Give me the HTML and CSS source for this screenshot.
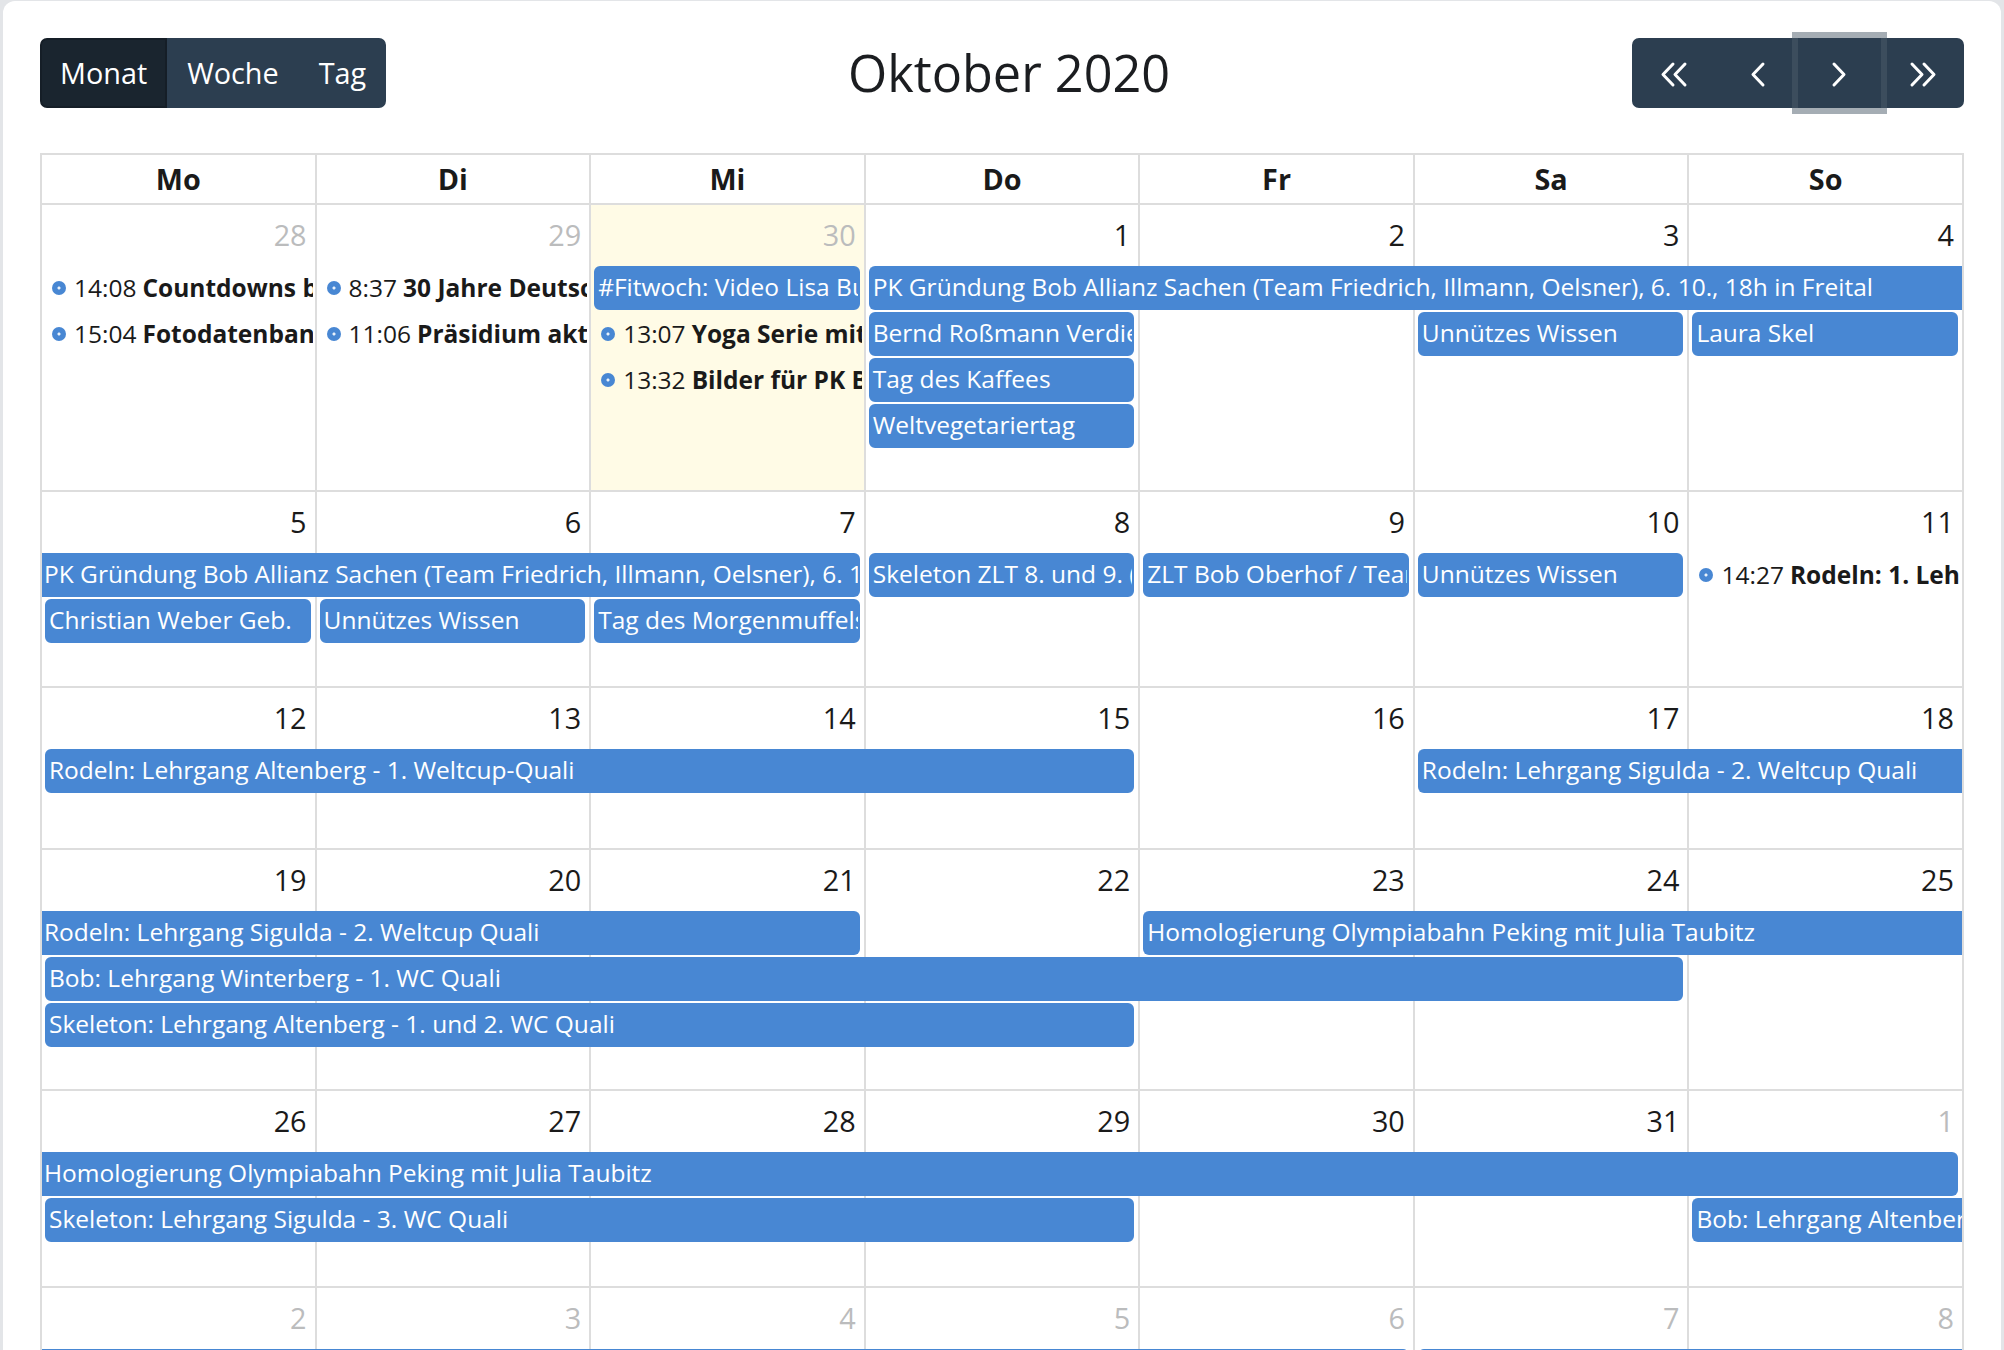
FILE: index.html
```html
<!DOCTYPE html>
<html lang="de">
<head>
<meta charset="utf-8">
<title>Kalender Oktober 2020</title>
<link rel="stylesheet" href="styles.css">
</head>
<body>
<div class="card">
  <div class="toolbar">
    <div class="btn-group">
      <button class="btn active">Monat</button>
      <button class="btn">Woche</button>
      <button class="btn">Tag</button>
    </div>
    <h2 class="title">Oktober 2020</h2>
    <div class="btn-group">
      <button class="btn icon-btn" aria-label="Vorheriges Jahr"><svg viewBox="0 0 42 42" width="42" height="42"><polyline points="20,12 10,22.5 20,33"/><polyline points="32,12 22,22.5 32,33"/></svg></button>
      <button class="btn icon-btn" aria-label="Zurück"><svg viewBox="0 0 42 42" width="42" height="42"><polyline points="27,12 17,22.5 27,33"/></svg></button>
      <button class="btn icon-btn focus" aria-label="Weiter"><svg viewBox="0 0 42 42" width="42" height="42"><polyline points="15,12 25,22.5 15,33"/></svg></button>
      <button class="btn icon-btn" aria-label="Nächstes Jahr"><svg viewBox="0 0 42 42" width="42" height="42"><polyline points="10,12 20,22.5 10,33"/><polyline points="22,12 32,22.5 22,33"/></svg></button>
    </div>
  </div>

  <div class="cal">
    <div class="head">
      <div>Mo</div><div>Di</div><div>Mi</div><div>Do</div><div>Fr</div><div>Sa</div><div>So</div>
    </div>

    <!-- Woche 1 -->
    <div class="week rows4">
      <div class="cell c1"></div><div class="cell c2"></div><div class="cell c3 today"></div><div class="cell c4"></div><div class="cell c5"></div><div class="cell c6"></div><div class="cell c7"></div>
      <div class="num c1 other">28</div><div class="num c2 other">29</div><div class="num c3 other">30</div><div class="num c4">1</div><div class="num c5">2</div><div class="num c6">3</div><div class="num c7">4</div>

      <div class="dot-ev" style="grid-column:1;grid-row:2"><span class="dot"></span><span class="t">14:08</span><b>Countdowns bis zum Saisonstart</b></div>
      <div class="dot-ev" style="grid-column:1;grid-row:3"><span class="dot"></span><span class="t">15:04</span><b>Fotodatenbank</b></div>
      <div class="dot-ev" style="grid-column:2;grid-row:2"><span class="dot"></span><span class="t">8:37</span><b>30 Jahre Deutsche Einheit</b></div>
      <div class="dot-ev" style="grid-column:2;grid-row:3"><span class="dot"></span><span class="t">11:06</span><b>Präsidium aktuell</b></div>
      <div class="ev" style="grid-column:3;grid-row:2">#Fitwoch: Video Lisa Buckwitz</div>
      <div class="dot-ev" style="grid-column:3;grid-row:3"><span class="dot"></span><span class="t">13:07</span><b>Yoga Serie mit Athleten</b></div>
      <div class="dot-ev" style="grid-column:3;grid-row:4"><span class="dot"></span><span class="t">13:32</span><b>Bilder für PK Bob Allianz</b></div>
      <div class="ev ne" style="grid-column:4 / 8;grid-row:2">PK Gründung Bob Allianz Sachen (Team Friedrich, Illmann, Oelsner), 6. 10., 18h in Freital</div>
      <div class="ev" style="grid-column:4;grid-row:3">Bernd Roßmann Verdienstorden</div>
      <div class="ev" style="grid-column:4;grid-row:4">Tag des Kaffees</div>
      <div class="ev" style="grid-column:4;grid-row:5">Weltvegetariertag</div>
      <div class="ev" style="grid-column:6;grid-row:3">Unnützes Wissen</div>
      <div class="ev" style="grid-column:7;grid-row:3">Laura Skel</div>
    </div>

    <!-- Woche 2 -->
    <div class="week rows2">
      <div class="cell c1"></div><div class="cell c2"></div><div class="cell c3"></div><div class="cell c4"></div><div class="cell c5"></div><div class="cell c6"></div><div class="cell c7"></div>
      <div class="num c1">5</div><div class="num c2">6</div><div class="num c3">7</div><div class="num c4">8</div><div class="num c5">9</div><div class="num c6">10</div><div class="num c7">11</div>

      <div class="ev ns" style="grid-column:1 / 4;grid-row:2">PK Gründung Bob Allianz Sachen (Team Friedrich, Illmann, Oelsner), 6. 10., 18h in Freital</div>
      <div class="ev" style="grid-column:4;grid-row:2">Skeleton ZLT 8. und 9. (Altenberg)</div>
      <div class="ev" style="grid-column:5;grid-row:2">ZLT Bob Oberhof / Team</div>
      <div class="ev" style="grid-column:6;grid-row:2">Unnützes Wissen</div>
      <div class="dot-ev" style="grid-column:7;grid-row:2"><span class="dot"></span><span class="t">14:27</span><b>Rodeln: 1. Lehrgang</b></div>
      <div class="ev" style="grid-column:1;grid-row:3">Christian Weber Geb.</div>
      <div class="ev" style="grid-column:2;grid-row:3">Unnützes Wissen</div>
      <div class="ev" style="grid-column:3;grid-row:3">Tag des Morgenmuffels</div>
    </div>

    <!-- Woche 3 -->
    <div class="week rows1">
      <div class="cell c1"></div><div class="cell c2"></div><div class="cell c3"></div><div class="cell c4"></div><div class="cell c5"></div><div class="cell c6"></div><div class="cell c7"></div>
      <div class="num c1">12</div><div class="num c2">13</div><div class="num c3">14</div><div class="num c4">15</div><div class="num c5">16</div><div class="num c6">17</div><div class="num c7">18</div>

      <div class="ev" style="grid-column:1 / 5;grid-row:2">Rodeln: Lehrgang Altenberg - 1. Weltcup-Quali</div>
      <div class="ev ne" style="grid-column:6 / 8;grid-row:2">Rodeln: Lehrgang Sigulda - 2. Weltcup Quali</div>
    </div>

    <!-- Woche 4 -->
    <div class="week rows3">
      <div class="cell c1"></div><div class="cell c2"></div><div class="cell c3"></div><div class="cell c4"></div><div class="cell c5"></div><div class="cell c6"></div><div class="cell c7"></div>
      <div class="num c1">19</div><div class="num c2">20</div><div class="num c3">21</div><div class="num c4">22</div><div class="num c5">23</div><div class="num c6">24</div><div class="num c7">25</div>

      <div class="ev ns" style="grid-column:1 / 4;grid-row:2">Rodeln: Lehrgang Sigulda - 2. Weltcup Quali</div>
      <div class="ev ne" style="grid-column:5 / 8;grid-row:2">Homologierung Olympiabahn Peking mit Julia Taubitz</div>
      <div class="ev" style="grid-column:1 / 7;grid-row:3">Bob: Lehrgang Winterberg - 1. WC Quali</div>
      <div class="ev" style="grid-column:1 / 5;grid-row:4">Skeleton: Lehrgang Altenberg - 1. und 2. WC Quali</div>
    </div>

    <!-- Woche 5 -->
    <div class="week rows2b">
      <div class="cell c1"></div><div class="cell c2"></div><div class="cell c3"></div><div class="cell c4"></div><div class="cell c5"></div><div class="cell c6"></div><div class="cell c7"></div>
      <div class="num c1">26</div><div class="num c2">27</div><div class="num c3">28</div><div class="num c4">29</div><div class="num c5">30</div><div class="num c6">31</div><div class="num c7 other">1</div>

      <div class="ev ns" style="grid-column:1 / 8;grid-row:2">Homologierung Olympiabahn Peking mit Julia Taubitz</div>
      <div class="ev" style="grid-column:1 / 5;grid-row:3">Skeleton: Lehrgang Sigulda - 3. WC Quali</div>
      <div class="ev ne" style="grid-column:7;grid-row:3">Bob: Lehrgang Altenberg - 2. WC Quali</div>
    </div>

    <!-- Woche 6 -->
    <div class="week rows2">
      <div class="cell c1"></div><div class="cell c2"></div><div class="cell c3"></div><div class="cell c4"></div><div class="cell c5"></div><div class="cell c6"></div><div class="cell c7"></div>
      <div class="num c1 other">2</div><div class="num c2 other">3</div><div class="num c3 other">4</div><div class="num c4 other">5</div><div class="num c5 other">6</div><div class="num c6 other">7</div><div class="num c7 other">8</div>

      <div class="ev ns" style="grid-column:1 / 6;grid-row:2">Bob: Lehrgang Altenberg - 2. WC Quali</div>
      <div class="ev ne" style="grid-column:6 / 8;grid-row:2">Rodeln: Lehrgang Igls</div>
    </div>
  </div>
</div>
</body>
</html>
```

FILE: styles.css
```css
* { box-sizing: border-box; }

html, body {
  margin: 0;
  height: 1350px;
  overflow: hidden;
}

body {
  background: #e3e5e8;
  font-family: "Open Sans", "DejaVu Sans", sans-serif;
  color: #1f2226;
}

.card {
  margin: 1px 3px 0;
  background: #fff;
  border-radius: 12px;
  padding: 37px 37px 0;
  height: 1420px;
}

/* toolbar */
.toolbar {
  display: flex;
  justify-content: space-between;
  align-items: center;
  height: 70px;
  margin-bottom: 45px;
}

.title {
  margin: 0;
  font-size: 50.4px;
  font-weight: 400;
  line-height: 1.2;
  color: #1b1d20;
}

.btn-group {
  display: flex;
  height: 70px;
}

.btn {
  font-family: "Open Sans", sans-serif;
  font-size: 28.8px;
  line-height: 42px;
  color: #fff;
  background: #2c3e50;
  border: 2px solid #2c3e50;
  padding: 12px 18px;
  height: 70px;
  margin: 0;
  cursor: pointer;
}

.btn:first-child { border-radius: 7px 0 0 7px; }
.btn:last-child { border-radius: 0 7px 7px 0; }

.btn.active {
  background: #1a252f;
  border-color: #151e27;
}

.icon-btn {
  width: 83px;
  padding: 12px 0;
  display: flex;
  align-items: center;
  justify-content: center;
}

.icon-btn svg {
  display: block;
  fill: none;
  stroke: #fff;
  stroke-width: 3;
  stroke-linecap: round;
  stroke-linejoin: round;
}

.btn.focus {
  position: relative;
  z-index: 1;
  box-shadow: 0 0 0 6px rgba(76, 91, 106, 0.5);
}

/* calendar table */
.cal {
  border-left: 2px solid #ddd;
  border-top: 2px solid #ddd;
}

.head {
  display: grid;
  grid-template-columns: repeat(7, 1fr);
}

.head div {
  border-right: 2px solid #ddd;
  border-bottom: 2px solid #ddd;
  text-align: center;
  font-weight: 700;
  font-size: 28.8px;
  line-height: 42px;
  padding: 3px 8px;
  color: #1a1a1a;
}

.week {
  display: grid;
  grid-template-columns: repeat(7, minmax(0, 1fr));
}

.rows4 { grid-template-rows: 61px repeat(4, 46px) 42px; }
.rows3 { grid-template-rows: 61px repeat(3, 46px) 42px; }
.rows2 { grid-template-rows: 61px repeat(2, 46px) 43px; }
.rows2b { grid-template-rows: 61px repeat(2, 46px) 44px; }
.rows1 { grid-template-rows: 61px 46px 55px; }

.cell {
  grid-row: 1 / -1;
  border-right: 2px solid #ddd;
  border-bottom: 2px solid #ddd;
}

.c1 { grid-column: 1; }
.c2 { grid-column: 2; }
.c3 { grid-column: 3; }
.c4 { grid-column: 4; }
.c5 { grid-column: 5; }
.c6 { grid-column: 6; }
.c7 { grid-column: 7; }

.today { background: #fffbe6; }

.num {
  grid-row: 1;
  text-align: right;
  font-size: 28.8px;
  line-height: 42px;
  padding: 9px 10px 0 0;
  color: #1a1a1a;
}

.num.other { color: #bbbcbd; }

/* events */
.ev {
  min-width: 0;
  height: 44px;
  margin: 0 6px 0 3px;
  background: #4887d3;
  border: 2px solid #4887d3;
  border-radius: 6px;
  color: #fff;
  font-size: 24.5px;
  line-height: 36px;
  padding: 1px 2px 3px;
  white-space: nowrap;
  overflow: hidden;
}

.ev.ns {
  margin-left: 0;
  border-left-width: 0;
  border-top-left-radius: 0;
  border-bottom-left-radius: 0;
}

.ev.ne {
  margin-right: 2px;
  border-right-width: 0;
  border-top-right-radius: 0;
  border-bottom-right-radius: 0;
}

.dot-ev {
  min-width: 0;
  height: 44px;
  margin: 0 4px 0 3px;
  display: flex;
  align-items: center;
  font-size: 24.5px;
  line-height: 36px;
  white-space: nowrap;
  overflow: hidden;
  color: #1a1a1a;
}

.dot {
  flex: none;
  width: 14px;
  height: 14px;
  margin: 0 8px 0 7px;
  border-radius: 50%;
  background: radial-gradient(circle, #eaf2fb 0 1px, #4887d3 2px);
}

.dot-ev .t { margin-right: 6px; }
.dot-ev b { font-weight: 700; }
```
